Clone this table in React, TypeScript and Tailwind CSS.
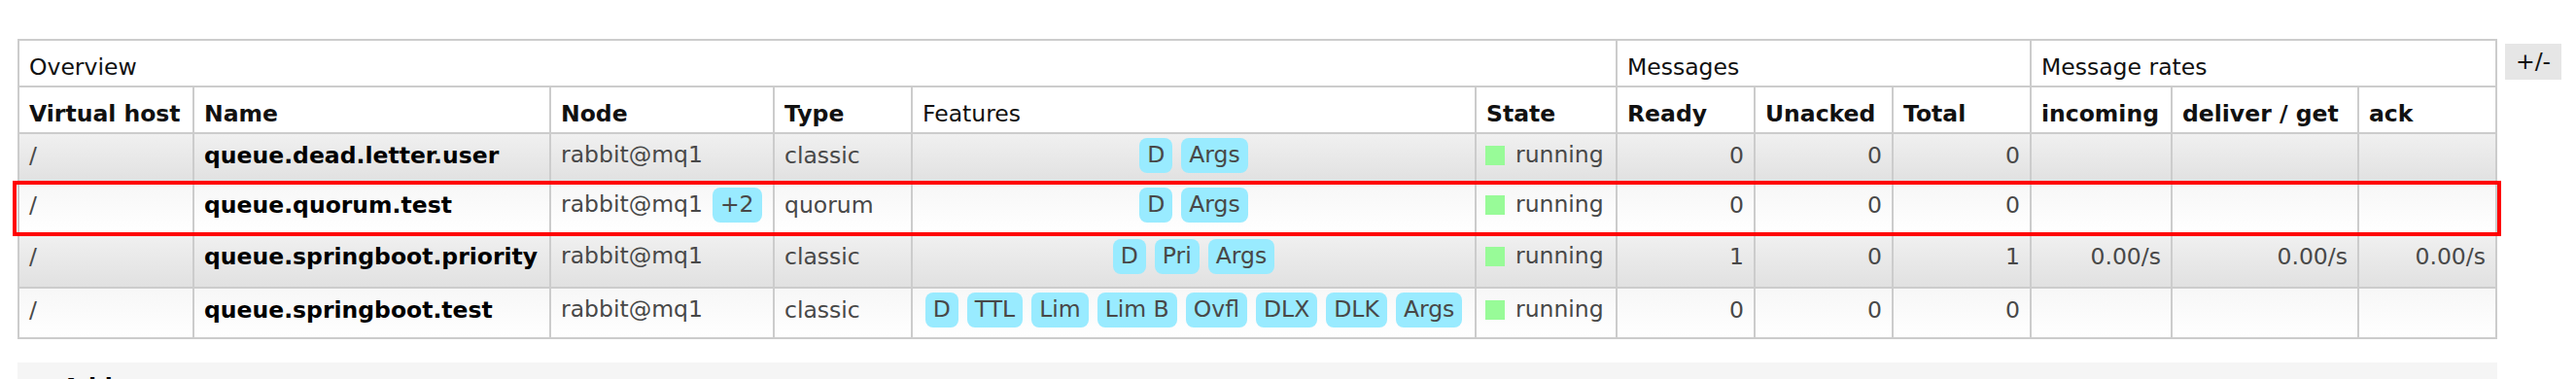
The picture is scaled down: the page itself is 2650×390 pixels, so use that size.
import React from 'react';

type Queue = {
    vhost: string;
    name: string;
    node: string;
    extraNodes?: number;
    type: string;
    features: string[];
    state: string;
    ready: number;
    unacked: number;
    total: number;
    rates?: { incoming: string; deliver: string; ack: string };
};

const QUEUES: Queue[] = [
    { vhost: '/', name: 'queue.dead.letter.user', node: 'rabbit@mq1', type: 'classic', features: ['D', 'Args'], state: 'running', ready: 0, unacked: 0, total: 0 },
    { vhost: '/', name: 'queue.quorum.test', node: 'rabbit@mq1', extraNodes: 2, type: 'quorum', features: ['D', 'Args'], state: 'running', ready: 0, unacked: 0, total: 0 },
    {
        vhost: '/', name: 'queue.springboot.priority', node: 'rabbit@mq1', type: 'classic', features: ['D', 'Pri', 'Args'], state: 'running', ready: 1, unacked: 0, total: 1,
        rates: { incoming: '0.00/s', deliver: '0.00/s', ack: '0.00/s' }
    },
    { vhost: '/', name: 'queue.springboot.test', node: 'rabbit@mq1', type: 'classic', features: ['D', 'TTL', 'Lim', 'Lim B', 'Ovfl', 'DLX', 'DLK', 'Args'], state: 'running', ready: 0, unacked: 0, total: 0 },
];

// alternating row backgrounds, same as the management UI
const ROW_BG = [
    'bg-gradient-to-b from-[#f0f0f0] to-[#e1e1e1]',
    'bg-gradient-to-b from-[#f7f7f7] to-[#ffffff]',
];

const ROW_H = ['h-[49px]', 'h-[51px]', 'h-[53px]', 'h-[50px]'];

const Chip = ({ children }: { children: React.ReactNode }) => (
    <span className="inline-flex items-center h-[36px] px-[8px] rounded-[8px] bg-[#99ebff] text-[#484848] leading-none whitespace-nowrap">
        {children}
    </span>
);

const App = () => {
    const th = 'bg-white px-[10px] pt-[10px] text-[#111] whitespace-nowrap';

    return (
        <div className="relative bg-white min-h-[390px] text-[23.5px] leading-normal text-[#484848]" style={{ fontFamily: '"DejaVu Sans", Verdana, sans-serif' }}>
            <div className="flex items-start pt-[40px] pl-[18px]">
                <div className="grid grid-cols-[178px_365px_228px_140px_578px_143px_140px_140px_140px_143px_190px_140px] gap-[2px] p-[2px] bg-[#cccccc] whitespace-nowrap">
                    {/* group headers */}
                    <div className={`${th} col-span-6 h-[46px]`}>Overview</div>
                    <div className={`${th} col-span-3`}>Messages</div>
                    <div className={`${th} col-span-3`}>Message rates</div>

                    {/* column headers */}
                    <div className={`${th} h-[46px] font-bold`}>Virtual host</div>
                    <div className={`${th} font-bold`}>Name</div>
                    <div className={`${th} font-bold`}>Node</div>
                    <div className={`${th} font-bold`}>Type</div>
                    <div className={th}>Features</div>
                    <div className={`${th} font-bold`}>State</div>
                    <div className={`${th} font-bold`}>Ready</div>
                    <div className={`${th} font-bold`}>Unacked</div>
                    <div className={`${th} font-bold`}>Total</div>
                    <div className={`${th} font-bold`}>incoming</div>
                    <div className={`${th} font-bold`}>deliver / get</div>
                    <div className={`${th} font-bold`}>ack</div>

                    {QUEUES.map((q, i) => {
                        const bg = ROW_BG[i % 2];
                        const td = `${bg} px-[10px] pt-[5px]`;
                        return (
                            <React.Fragment key={q.name}>
                                <div className={`${td} ${ROW_H[i]}`}>{q.vhost}</div>
                                <div className={`${td} font-bold text-black`}>{q.name}</div>
                                <div className={`${bg} px-[10px] pt-[4px] flex items-start`}>
                                    <span className="h-[36px] flex items-center">{q.node}</span>
                                    {q.extraNodes && (
                                        <span className="ml-[10px]">
                                            <Chip>+{q.extraNodes}</Chip>
                                        </span>
                                    )}
                                </div>
                                <div className={td}>{q.type}</div>
                                <div className={`${bg} px-[9px] pt-[4px] flex flex-nowrap justify-center items-start gap-[9px]`}>
                                    {q.features.map(f => (
                                        <Chip key={f}>{f}</Chip>
                                    ))}
                                </div>
                                <div className={`${bg} px-[9px] pt-[4px]`}>
                                    <div className="h-[36px] flex items-center gap-[11px]">
                                        <span className="w-[20px] h-[20px] bg-[#98fb98]"></span>
                                        <span>{q.state}</span>
                                    </div>
                                </div>
                                <div className={`${td} text-right`}>{q.ready}</div>
                                <div className={`${td} text-right`}>{q.unacked}</div>
                                <div className={`${td} text-right`}>{q.total}</div>
                                <div className={`${td} text-right`}>{q.rates?.incoming}</div>
                                <div className={`${td} text-right`}>{q.rates?.deliver}</div>
                                <div className={`${td} text-right`}>{q.rates?.ack}</div>
                            </React.Fragment>
                        );
                    })}
                </div>

                <div className="ml-[8px] mt-[5px] w-[58px] h-[37px] bg-[#e6e6e6] flex items-center justify-center text-[#111]">
                    +/-
                </div>
            </div>

            {/* next section, cut off by the viewport */}
            <div className="ml-[18px] mt-[24px] w-[2551px] bg-[#f5f5f5] pl-[46px] pt-[8px] pb-[12px]">
                <h2 className="font-bold text-black">Add a new queue</h2>
            </div>

            {/* highlight around the quorum queue */}
            <div className="absolute left-[13px] top-[186px] w-[2560px] h-[57px] border-[4px] border-[#ff0000] pointer-events-none"></div>
        </div>
    );
};

export default App;
